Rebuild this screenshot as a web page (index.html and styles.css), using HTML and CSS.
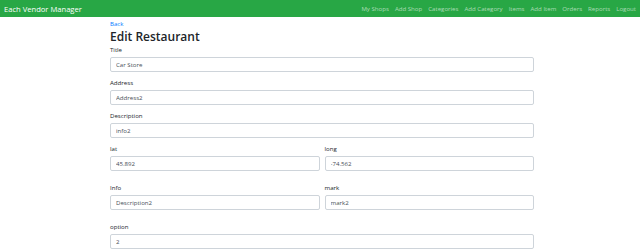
FILE: index.html
```html
<!DOCTYPE html>
<html lang="en">
<head>
  <meta charset="UTF-8">
  <meta name="viewport" content="width=device-width, initial-scale=1.0">
  <title>Edit Restaurant</title>
  <link rel="stylesheet" href="styles.css">
</head>
<body>
  <nav class="navbar">
    <a class="brand" href="#">Each Vendor Manager</a>
    <div class="nav-links">
      <a href="#">My Shops</a>
      <a href="#">Add Shop</a>
      <a href="#">Categories</a>
      <a href="#">Add Category</a>
      <a href="#">Items</a>
      <a href="#">Add Item</a>
      <a href="#">Orders</a>
      <a href="#">Reports</a>
      <a href="#">Logout</a>
    </div>
  </nav>

  <div class="container">
    <a class="back" href="#">Back</a>
    <h2>Edit Restaurant</h2>

    <form>
      <div class="form-group">
        <label>Title</label>
        <input type="text" value="Car Store">
      </div>
      <div class="form-group">
        <label>Address</label>
        <input type="text" value="Address2">
      </div>
      <div class="form-group">
        <label>Description</label>
        <input type="text" value="info2">
      </div>

      <div class="row">
        <div class="form-group">
          <label>lat</label>
          <input type="text" value="45.892">
        </div>
        <div class="form-group">
          <label>long</label>
          <input type="text" value="-74.562">
        </div>
      </div>

      <div class="row">
        <div class="form-group">
          <label>Info</label>
          <input type="text" value="Description2">
        </div>
        <div class="form-group">
          <label>mark</label>
          <input type="text" value="mark2">
        </div>
      </div>

      <div class="form-group">
        <label>option</label>
        <input type="text" value="2">
      </div>
    </form>
  </div>
</body>
</html>
```

FILE: styles.css
```css
body {
  margin: 0;
  font-family: "Open Sans", "Noto Sans", sans-serif;
  color: #212529;
  background-color: #fff;
}

a { text-decoration: none; }

/* barra de arriba */
.navbar {
  display: flex;
  align-items: center;
  justify-content: space-between;
  height: 17px;
  padding: 0 4px 0 4px;
  background-color: #28a745;
}

.brand {
  color: #fff;
  font-size: 7.6px;
}

.nav-links {
  display: flex;
  gap: 6px;
}

.nav-links a {
  color: rgba(255, 255, 255, 0.6);
  font-size: 6.1px;
}

/* contenido */
.container {
  width: 424px;
  margin-left: 110px;
}

.back {
  display: block;
  margin-top: 2px;
  line-height: 9px;
  font-size: 6.1px;
  color: #007bff;
}

h2 {
  margin: 1px 0 1px 0;
  font-size: 12px;
  line-height: 15px;
  font-weight: 600;
}

.form-group {
  margin-bottom: 6px;
}

label {
  display: block;
  margin-bottom: 3px;
  font-size: 6.1px;
  line-height: 9px;
}

input {
  display: block;
  box-sizing: border-box;
  width: 100%;
  height: 15px;
  padding: 0 5px;
  border: 1px solid #ced4da;
  border-radius: 2px;
  font-family: inherit;
  font-size: 6.1px;
  color: #495057;
}

.row {
  display: grid;
  grid-template-columns: 1fr 1fr;
  column-gap: 5px;
  margin-bottom: 6px;
}
```
